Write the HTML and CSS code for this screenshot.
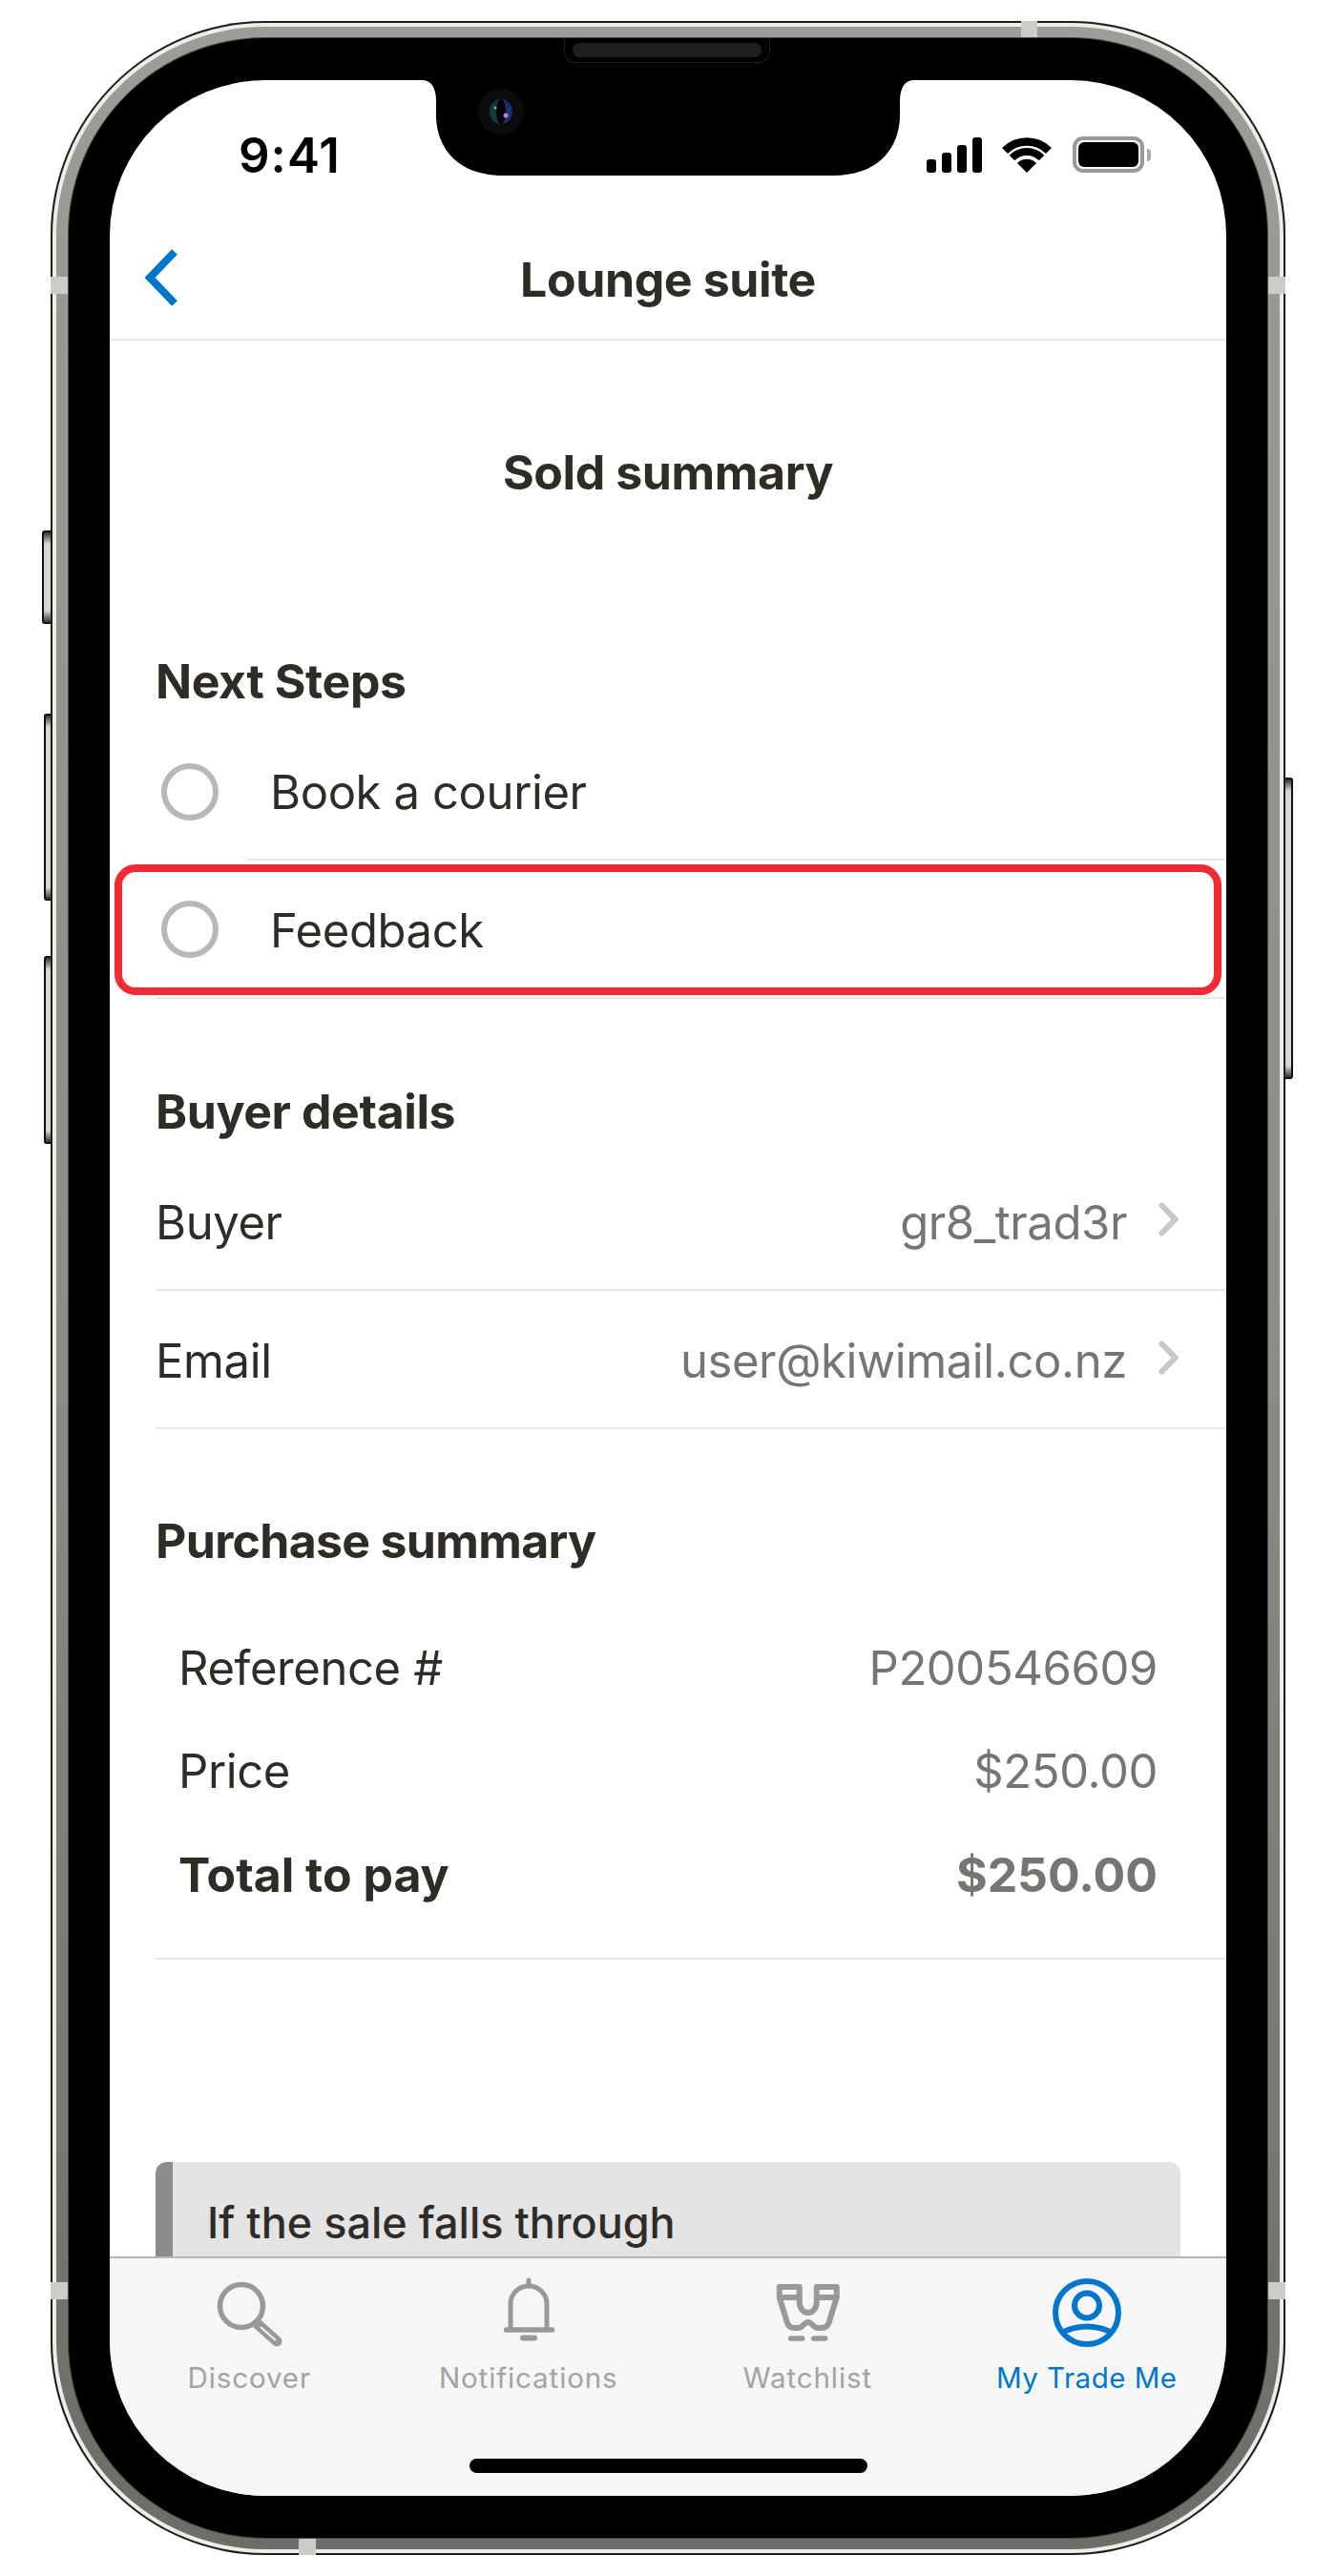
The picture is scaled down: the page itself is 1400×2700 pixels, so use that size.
FILE: index.html
```html
<!DOCTYPE html>
<html lang="en">
<head>
    <meta charset="UTF-8">
    <meta name="viewport" content="width=device-width, initial-scale=1.0">
    <title>Lounge suite</title>
    <link rel="stylesheet" href="styles.css">
</head>
<body>
<div class="phone">
    <!-- Side buttons -->
    <span class="side-btn mute"></span>
    <span class="side-btn vol-up"></span>
    <span class="side-btn vol-down"></span>
    <span class="side-btn power"></span>

    <!-- Antenna bands -->
    <span class="band band-top"></span>
    <span class="band band-bottom"></span>
    <span class="band band-left-1"></span>
    <span class="band band-left-2"></span>
    <span class="band band-right-1"></span>
    <span class="band band-right-2"></span>

    <div class="bezel">
        <div class="speaker"><span class="speaker-mesh"></span></div>

        <div class="screen">
            <svg class="notch" width="516" height="100" viewBox="0 0 516 100">
                <path d="M0 0C10 0 15 8 15 22V40C17 75 41 100 85 100H431C475 100 499 75 501 40V22C501 8 506 0 516 0Z" fill="#000"/>
                <circle cx="83" cy="33" r="24" fill="#0b0b0c"/>
                <ellipse cx="83" cy="33" rx="12" ry="13" fill="#1c2f6e"/>
                <path d="M83 20A12 13 0 0 0 83 46Z" fill="#123a38"/>
                <ellipse cx="83" cy="33" rx="5" ry="13" fill="#020208"/>
                <circle cx="77" cy="29" r="1.5" fill="#7fa7a0"/>
                <circle cx="88" cy="37" r="2.5" fill="#b58ab8"/>
            </svg>

            <div class="status-bar">
                <span class="time">9:41</span>
                <div class="status-icons">
                    <svg width="58" height="37" viewBox="0 0 58 37">
                        <rect x="0" y="23" width="10" height="14" rx="3"/>
                        <rect x="16" y="16" width="10" height="21" rx="3"/>
                        <rect x="32" y="8" width="10" height="29" rx="3"/>
                        <rect x="48" y="0" width="10" height="37" rx="3"/>
                    </svg>
                    <svg class="wifi" width="52" height="37" viewBox="0 0 52 37">
                        <path d="M3 14A32.5 32.5 0 0 1 49 14" fill="none" stroke="#000" stroke-width="8.5"/>
                        <path d="M10.5 21.5A22 22 0 0 1 41.5 21.5" fill="none" stroke="#000" stroke-width="8"/>
                        <path d="M26 37L16 27A14 14 0 0 1 36 27Z"/>
                    </svg>
                    <div class="battery"><span class="battery-fill"></span></div>
                    <span class="battery-nub"></span>
                </div>
            </div>

            <div class="nav-bar">
                <svg class="back" width="36" height="60" viewBox="0 0 36 60">
                    <path d="M32 3L6 30L32 57" fill="none" stroke="#0077cc" stroke-width="8"/>
                </svg>
                <h1 class="nav-title">Lounge suite</h1>
                <span></span>
            </div>

            <div class="content">
                <h2 class="page-title">Sold summary</h2>

                <h3 class="section-title first">Next Steps</h3>
                <div class="step">
                    <span class="radio"></span>
                    <span class="step-label step-line">Book a courier</span>
                </div>
                <div class="step step-last">
                    <span class="radio"></span>
                    <span class="step-label">Feedback</span>
                    <span class="highlight"></span>
                </div>

                <h3 class="section-title buyer">Buyer details</h3>
                <div class="detail-row">
                    <span class="detail-name">Buyer</span>
                    <span class="detail-value">gr8_trad3r</span>
                    <svg class="chevron" width="21" height="36" viewBox="0 0 21 36">
                        <path d="M3.5 3.5L17.5 18L3.5 32.5" fill="none" stroke="#c8c8c8" stroke-width="6" stroke-linecap="round"/>
                    </svg>
                </div>
                <div class="detail-row">
                    <span class="detail-name">Email</span>
                    <span class="detail-value">user@kiwimail.co.nz</span>
                    <svg class="chevron" width="21" height="36" viewBox="0 0 21 36">
                        <path d="M3.5 3.5L17.5 18L3.5 32.5" fill="none" stroke="#c8c8c8" stroke-width="6" stroke-linecap="round"/>
                    </svg>
                </div>

                <h3 class="section-title purchase">Purchase summary</h3>
                <div class="summary">
                    <div class="summary-row"><span>Reference #</span><span class="summary-value">P200546609</span></div>
                    <div class="summary-row"><span>Price</span><span class="summary-value">$250.00</span></div>
                    <div class="summary-row total"><span>Total to pay</span><span class="summary-value">$250.00</span></div>
                </div>

                <div class="callout">
                    <p class="callout-title">If the sale falls through</p>
                </div>
            </div>

            <div class="tab-bar">
                <div class="tabs">
                    <div class="tab">
                        <svg class="tab-icon" viewBox="0 0 100 84">
                            <circle cx="42" cy="37" r="22.5" fill="none" stroke="#999" stroke-width="5.5"/>
                            <path d="M59 56L79 74" stroke="#999" stroke-width="11" stroke-linecap="round"/>
                            <path d="M62 59L78 73" stroke="#f6f6f6" stroke-width="2"/>
                        </svg>
                        <span class="tab-label">Discover</span>
                    </div>
                    <div class="tab">
                        <svg class="tab-icon" viewBox="0 0 100 84">
                            <path d="M50 10V16" stroke="#999" stroke-width="5" stroke-linecap="round"/>
                            <path d="M31 60V35A19 19 0 0 1 69 35V60" fill="none" stroke="#999" stroke-width="5"/>
                            <path d="M26.5 62H74.5" stroke="#999" stroke-width="5.5" stroke-linecap="round"/>
                            <path d="M44 70.5H56" stroke="#999" stroke-width="6" stroke-linecap="round"/>
                        </svg>
                        <span class="tab-label">Notifications</span>
                    </div>
                    <div class="tab">
                        <svg class="tab-icon" viewBox="-3.75 0 100 84">
                            <g fill="none" stroke="#999" stroke-width="6" stroke-linejoin="round">
                                <path d="M17 28V17H38V28H17L25 54Q27 60 33 60H37C41 60 43 54 47 54C51 54 53 60 57 60H61Q67 60 69 54L77 28H56V17H77V28"/>
                                <path d="M38 28V33A9 11 0 0 0 56 33V28"/>
                                <path d="M29 71H41M53 71H65" stroke-width="5.5" stroke-linecap="round"/>
                            </g>
                        </svg>
                        <span class="tab-label">Watchlist</span>
                    </div>
                    <div class="tab active">
                        <svg class="tab-icon" viewBox="0 0 100 84">
                            <g fill="none" stroke="#0077cc" stroke-width="6">
                                <circle cx="50" cy="44" r="33"/>
                                <circle cx="50" cy="36.5" r="13"/>
                                <path d="M23 65Q50 52 77 65"/>
                            </g>
                        </svg>
                        <span class="tab-label">My Trade Me</span>
                    </div>
                </div>
                <div class="home-indicator"></div>
            </div>
        </div>
    </div>
</div>
</body>
</html>
```

FILE: styles.css
```css
* {
    box-sizing: border-box;
    margin: 0;
    padding: 0;
}

body {
    background: #fff;
    font-family: Inter, "Liberation Sans", sans-serif;
    color: #2f2c28;
}

/* Phone frame */
.phone {
    position: relative;
    width: 1294px;
    height: 2656px;
    margin: 22px 0 0 53px;
    padding: 18px 19px;
    border-radius: 225px;
    background: linear-gradient(180deg, #9c9d96 0%, #8c8d86 50%, #6c6d66 100%);
    box-shadow: inset 0 0 0 2px #1c1c1c, inset 0 0 0 6px #ecece9;
}

.bezel {
    position: relative;
    height: 100%;
    padding: 44px 43px;
    border-radius: 206px;
    background: #000;
    box-shadow: 0 0 0 1px #4a4a48;
}

.speaker {
    position: absolute;
    top: 0;
    left: 519px;
    width: 216px;
    height: 26px;
    padding: 5px 8px;
    border: 1px solid #1f1f1f;
    border-top: none;
    border-radius: 0 0 12px 12px;
}

.speaker-mesh {
    display: block;
    height: 15px;
    border-radius: 7px;
    background: #1e1e1e;
}

.side-btn {
    position: absolute;
    border: 2px solid #111;
    border-right: none;
    border-radius: 3px 0 0 3px;
    background: linear-gradient(180deg, #333 0, #d6d6d2 12px, #d6d6d2 calc(100% - 12px), #333 100%);
}

.mute {
    top: 534px;
    left: -9px;
    width: 9px;
    height: 98px;
}

.vol-up {
    top: 726px;
    left: -7px;
    width: 7px;
    height: 196px;
}

.vol-down {
    top: 980px;
    left: -7px;
    width: 7px;
    height: 197px;
}

.power {
    top: 793px;
    right: -8px;
    width: 8px;
    height: 316px;
    border: 2px solid #111;
    border-left: none;
    border-radius: 0 3px 3px 0;
}

.band {
    position: absolute;
    background: #ccccc8;
}

.band-top {
    top: 0;
    left: 1017px;
    width: 17px;
    height: 17px;
}

.band-bottom {
    bottom: 0;
    left: 260px;
    width: 18px;
    height: 17px;
}

.band-left-1,
.band-left-2 {
    left: 0;
    width: 18px;
    height: 18px;
}

.band-right-1,
.band-right-2 {
    right: 0;
    width: 18px;
    height: 18px;
}

.band-left-1,
.band-right-1 {
    top: 268px;
}

.band-left-2,
.band-right-2 {
    top: 2370px;
}

/* Screen */
.screen {
    position: relative;
    display: flex;
    flex-direction: column;
    height: 100%;
    overflow: hidden;
    border-radius: 163px;
    background: #fff;
}

.notch {
    position: absolute;
    top: 0;
    left: 327px;
}

.status-bar {
    display: flex;
    justify-content: space-between;
    align-items: center;
    height: 98px;
    padding: 58px 79px 0 135px;
}

.time {
    font-size: 51px;
    font-weight: 600;
    letter-spacing: 1px;
    color: #000;
}

.status-icons {
    display: flex;
    align-items: center;
}

.wifi {
    margin: 0 22px 0 21px;
}

.battery {
    width: 75px;
    height: 38px;
    padding: 2px;
    border: 4px solid #999;
    border-radius: 11px;
}

.battery-fill {
    display: block;
    height: 100%;
    border-radius: 6px;
    background: #000;
}

.battery-nub {
    width: 4px;
    height: 13px;
    margin-left: 3px;
    border-radius: 0 4px 4px 0;
    background: #aaa;
}

.nav-bar {
    display: grid;
    grid-template-columns: 1fr auto 1fr;
    align-items: center;
    height: 175px;
    padding: 49px 36px 0;
    border-bottom: 2px solid #e8e8e6;
}

.back {
    margin-bottom: 5px;
}

.nav-title {
    font-size: 50px;
    font-weight: 700;
    letter-spacing: -0.4px;
}

.content {
    flex: 1;
    overflow: hidden;
    padding-left: 48px;
}

.page-title {
    margin-top: 88px;
    padding-right: 48px;
    font-size: 50px;
    line-height: 100px;
    font-weight: 700;
    letter-spacing: -0.4px;
    text-align: center;
}

.section-title {
    font-size: 50px;
    line-height: 60px;
    font-weight: 700;
    letter-spacing: -0.4px;
}

.first {
    margin: 139px 0 13px;
}

.buyer {
    margin: 88px 0 13px;
}

.purchase {
    margin: 87px 0 49px;
    letter-spacing: -0.7px;
}

/* Next steps */
.step {
    position: relative;
    display: flex;
    align-items: stretch;
    height: 145px;
    font-size: 49px;
    letter-spacing: -0.4px;
}

.step-last {
    border-bottom: 2px solid #e8e8e6;
}

.radio {
    flex: none;
    align-self: center;
    width: 60px;
    height: 60px;
    margin: 0 30px 0 6px;
    border: 6px solid #b8b8b6;
    border-radius: 50%;
}

.step-label {
    flex: 1;
    display: flex;
    align-items: center;
    padding: 3px 0 0 24px;
}

.step-line {
    border-bottom: 2px solid #e8e8e6;
}

.highlight {
    position: absolute;
    top: 4px;
    right: 5px;
    bottom: 2px;
    left: -43px;
    border: 8px solid #f32a33;
    border-radius: 22px;
}

/* Buyer rows */
.detail-row {
    display: flex;
    align-items: center;
    height: 145px;
    padding: 3px 50px 0 0;
    border-bottom: 2px solid #e8e8e6;
    font-size: 49px;
    letter-spacing: -0.4px;
}

.detail-name {
    flex: 1;
}

.detail-value {
    color: #757572;
}

.chevron {
    margin: 0 0 7px 33px;
}

/* Purchase summary */
.summary {
    padding: 0 72px 32px 24px;
    border-bottom: 2px solid #e8e8e6;
}

.summary-row {
    display: flex;
    justify-content: space-between;
    align-items: center;
    height: 108.5px;
    font-size: 49px;
    letter-spacing: -0.4px;
}

.summary-value {
    color: #757572;
}

.total {
    font-size: 50px;
    font-weight: 700;
    letter-spacing: 0;
}

.callout {
    margin: 212px 48px 0 0;
    padding: 34px 0 80px 36px;
    border-left: 18px solid #8c8c8c;
    border-radius: 12px;
    background: #e4e4e4;
}

.callout-title {
    font-size: 45px;
    line-height: 60px;
    font-weight: 500;
}

/* Tab bar */
.tab-bar {
    flex: none;
    height: 251px;
    padding-top: 13px;
    border-top: 2px solid #b5b5b5;
    background: #f6f6f6;
}

.tabs {
    display: grid;
    grid-template-columns: repeat(4, 1fr);
}

.tab {
    display: flex;
    flex-direction: column;
    align-items: center;
}

.tab-icon {
    display: block;
    width: 100px;
    height: 84px;
}

.tab-label {
    margin-top: 10px;
    font-size: 29.5px;
    line-height: 36px;
    letter-spacing: 0.9px;
    color: #a3a3a3;
}

.tab.active .tab-label {
    letter-spacing: 0.5px;
    color: #0077cc;
}

.home-indicator {
    width: 417px;
    height: 15px;
    margin: 67px auto 0;
    border-radius: 8px;
    background: #000;
}
```
